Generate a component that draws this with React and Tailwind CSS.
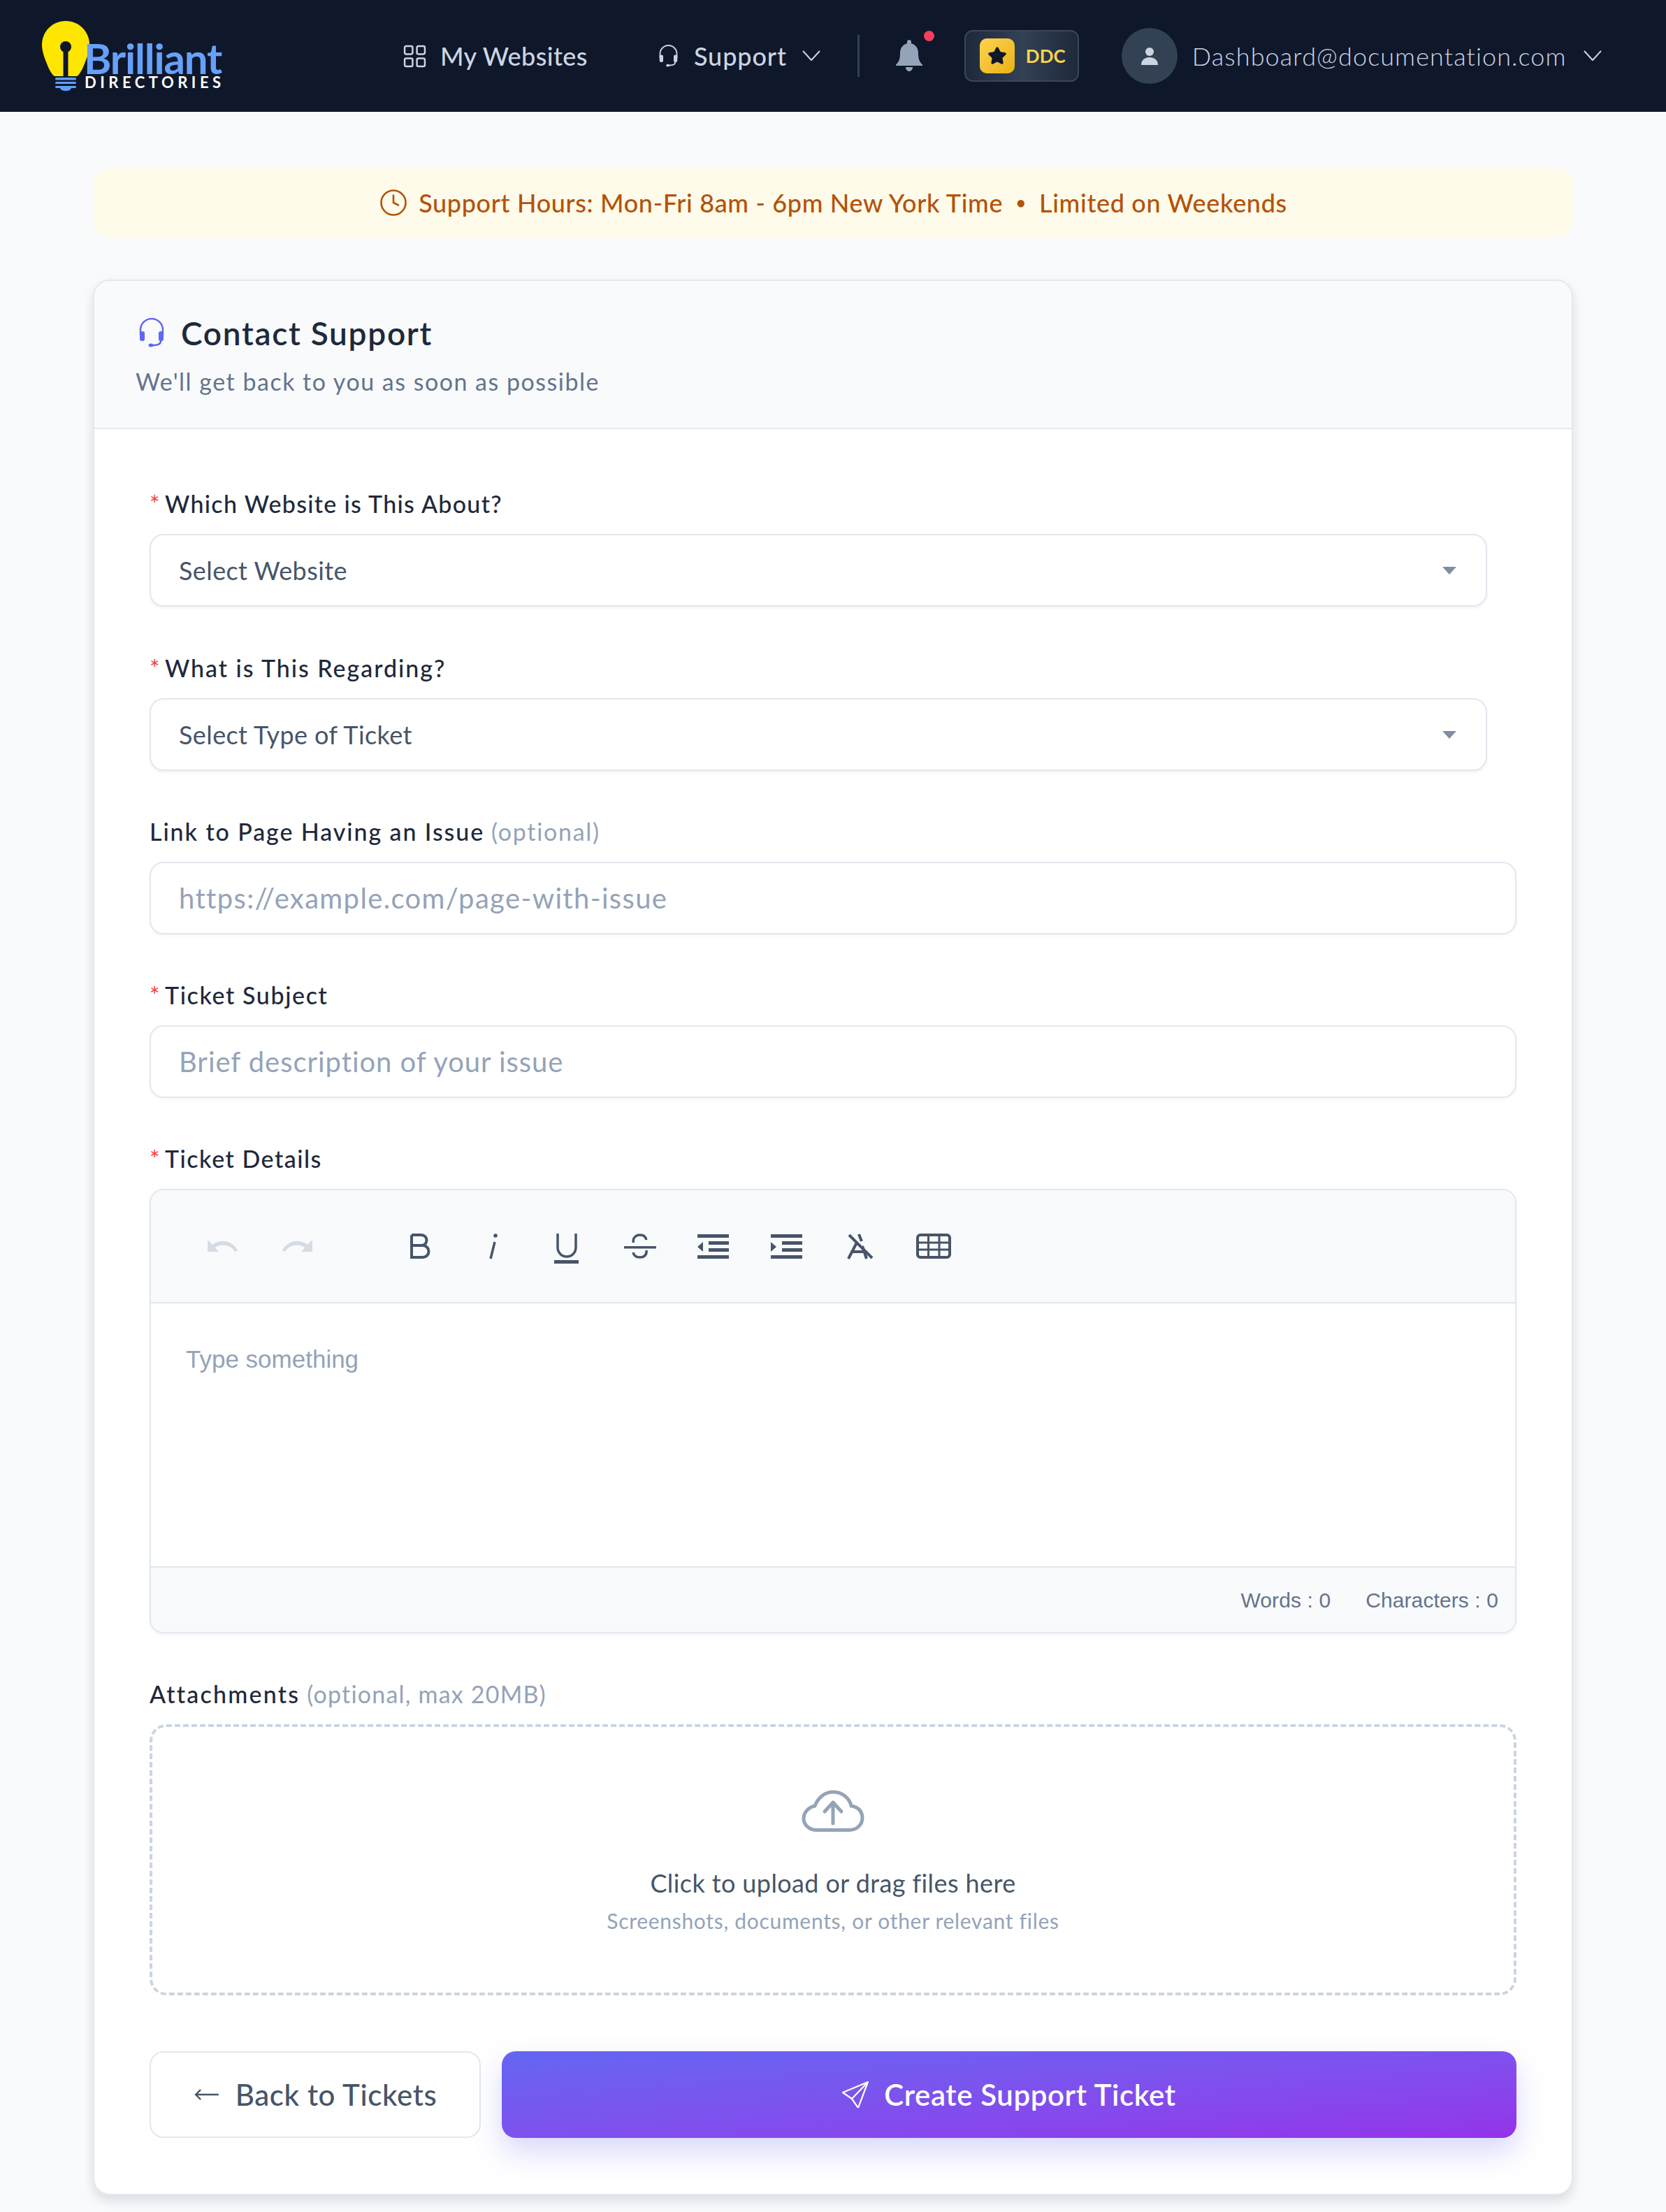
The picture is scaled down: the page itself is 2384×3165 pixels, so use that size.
import React from "react";
import { Clock, MoveLeft, Star } from "lucide-react";

const Headset = ({ className }) => (
  <svg viewBox="0 0 36 42" fill="none" stroke="currentColor" strokeWidth="2.500" strokeLinecap="round" className={className}>
    <path d="M2 24v-7a16 16 0 0 1 32 0v7" />
    <rect x="1" y="19" width="7" height="14" rx="3" fill="currentColor" stroke="none" />
    <rect x="28" y="19" width="7" height="14" rx="3" fill="currentColor" stroke="none" />
    <path d="M31 33c0 4-4 6-11 6" />
    <ellipse cx="17" cy="39" rx="3.500" ry="2.500" fill="currentColor" stroke="none" />
  </svg>
);

const Chevron = ({ className }) => (
  <svg viewBox="0 0 26 16" fill="none" stroke="currentColor" strokeWidth="2" strokeLinecap="round" strokeLinejoin="round" className={className}>
    <path d="M1.500 1.500 13 14 24.500 1.500" />
  </svg>
);

const GridIcon = ({ className }) => (
  <svg viewBox="0 0 32 32" fill="none" stroke="currentColor" strokeWidth="2.400" className={className}>
    <rect x="2" y="2" width="11" height="11" rx="2" />
    <rect x="19" y="2" width="11" height="11" rx="2" />
    <rect x="2" y="19" width="11" height="11" rx="2" />
    <rect x="19" y="19" width="11" height="11" rx="2" />
  </svg>
);

const BellIcon = ({ className }) => (
  <svg viewBox="0 0 40 46" fill="currentColor" className={className}>
    <path d="M20 0c1.700 0 3 1.300 3 3v2.200C30 7 33 12.500 33 19c0 9 2 13 6 16.500V37H1v-1.500C5 32 7 28 7 19 7 12.500 10 7 17 5.200V3c0-1.700 1.300-3 3-3z" />
    <path d="M15 39h10c0 3.500-2.200 6-5 6s-5-2.500-5-6z" />
  </svg>
);

const UserIcon = ({ className }) => (
  <svg viewBox="0 0 28 28" fill="currentColor" className={className}>
    <circle cx="14" cy="8" r="6" />
    <path d="M2 27c0-7 5-11 12-11s12 4 12 11z" />
  </svg>
);

const UndoIcon = ({ className }) => (
  <svg viewBox="0 0 48 20" fill="currentColor" className={className}>
    <path d="M1 0v18h17l-6-6c4-3 8-4 12-4 8 0 15 4 18 10l4-2C42 7 33 2 24 2c-6 0-11 2-16 5z" />
  </svg>
);

// toolbar icons share a 48 box, drawn 36px tall
const ToolIcon = ({ w = 48, children }) => (
  <svg viewBox={`0 0 ${w} 48`} width={w} height="48" fill="none" stroke="#475569" className="overflow-visible">
    {children}
  </svg>
);

const BoldIcon = () => (
  <ToolIcon>
    <path strokeWidth="4" d="M13 8v32h16a8.500 8.500 0 0 0 0-17H13m0 0h14a7.500 7.500 0 0 0 0-15H13" />
  </ToolIcon>
);

const ItalicIcon = () => (
  <ToolIcon>
    <path strokeWidth="3.500" d="M27 18l-6 24" />
    <circle cx="28" cy="9" r="2.800" fill="#475569" stroke="none" />
  </ToolIcon>
);

const UnderlineIcon = () => (
  <ToolIcon>
    <path strokeWidth="3.500" d="M12 6v20a13 13 0 0 0 26 0V6" />
    <rect x="7" y="44" width="35" height="5" fill="#475569" stroke="none" />
  </ToolIcon>
);

const StrikeIcon = () => (
  <ToolIcon>
    <rect x="2" y="24" width="46" height="3.500" fill="#475569" stroke="none" />
    <path strokeWidth="3.500" d="M15.500 19C14 12 19 8 25 8c5 0 8 3 9 7" />
    <path strokeWidth="3.500" d="M15 33c1 5 5 7 10 7 6 0 10-4 9-10" />
  </ToolIcon>
);

const IndentIcon = ({ out }) => (
  <ToolIcon>
    <rect x="2" y="7" width="45" height="5" fill="#475569" stroke="none" />
    <rect x="18" y="17" width="29" height="5" fill="#475569" stroke="none" />
    <rect x="18" y="27" width="29" height="5" fill="#475569" stroke="none" />
    <rect x="2" y="37" width="45" height="5" fill="#475569" stroke="none" />
    <path d={out ? "M10 18v14l-8-7z" : "M2 18v14l8-7z"} fill="#475569" stroke="none" />
  </ToolIcon>
);

const ClearIcon = () => (
  <ToolIcon>
    <path strokeWidth="4" d="M8 42l12-23M23 7l4 10M28 24l6 18M9 8l33 33M13 32h16" />
  </ToolIcon>
);

const TableIcon = () => (
  <ToolIcon w={50}>
    <rect x="2" y="8" width="46" height="32" rx="4" strokeWidth="4" />
    <path strokeWidth="3" d="M2 19h46M2 29h46M17.500 8v32M33 8v32" />
  </ToolIcon>
);

const CloudIcon = ({ className }) => (
  <svg viewBox="0 0 90 60" fill="none" stroke="currentColor" strokeWidth="5" strokeLinecap="round" strokeLinejoin="round" className={className}>
    <path d="M22 57.500h46c11 0 19-7.500 19-17.500 0-10-7-16-16-17C69 12 58 3 45 3 34 3 24 10 19 23 10 25 3 32 3 41c0 9 8 16.500 19 16.500z" />
    <path d="M45 48V18M33 31l12-13 12 13" />
  </svg>
);

const PlaneIcon = ({ className }) => (
  <svg viewBox="0 0 38 38" fill="none" stroke="currentColor" strokeWidth="2.200" strokeLinejoin="round" className={className}>
    <path d="M37 1 1 16l13 9 9 13z" />
    <path d="M37 1 14 25" />
  </svg>
);

const Logo = () => (
  <div className="relative w-[258px] h-[100px]">
    <svg viewBox="0 0 68 100" className="absolute left-0 top-0 w-[68px] h-[100px]">
      <path d="M34 0C15 0 0 15 0 34c0 10 4 20 9 32 4 9 8 13 9 13h32c1 0 5-4 9-13 5-12 9-22 9-32C68 15 53 0 34 0z" fill="#ffe600" />
      <circle cx="34" cy="37" r="8" fill="#0f172a" />
      <rect x="30.500" y="40" width="7" height="39" fill="#0f172a" />
      <rect x="19" y="81" width="30" height="3.500" rx="1.500" fill="#60a0fa" />
      <rect x="19" y="87" width="30" height="3" rx="1.500" fill="#60a0fa" />
      <rect x="19" y="93" width="30" height="3" rx="1.500" fill="#60a0fa" />
      <path d="M26 96h16c-1 3-4 4-8 4s-7-1-8-4z" fill="#60a0fa" />
    </svg>
    <div className="absolute left-[60px] top-[28px] font-[Lato,sans-serif] font-bold text-[60px] leading-[50px] text-[#66a1f9] tracking-[-1.200px]">
      Brilliant
    </div>
    <div className="absolute left-[61px] top-[78px] font-[Lato,sans-serif] font-bold text-[22px] leading-[20px] text-white tracking-[5.500px]">
      DIRECTORIES
    </div>
  </div>
);

const Header = () => (
  <header className="h-[160px] bg-[#0f172a] flex items-center pl-[60px] text-[#cbd5e1]">
    <Logo />
    <div className="flex items-center ml-[259px]">
      <GridIcon className="w-[33px] h-[33px]" />
      <span className="ml-[20px] w-[211px] text-[36px] font-medium tracking-[0.4px]">My Websites</span>
    </div>
    <div className="flex items-center ml-[102px]">
      <Headset className="w-[27px] h-[32px]" />
      <span className="ml-[23px] text-[36px] font-medium tracking-[0.9px]">Support</span>
      <Chevron className="ml-[22px] w-[26px] h-[16px]" />
    </div>
    <div className="w-[3px] h-[60px] bg-[#334155] ml-[53px]" />
    <div className="relative ml-[51px] text-[#94a3b8]">
      <BellIcon className="w-[40px] h-[46px]" />
      <span className="absolute -top-[13px] -right-[16px] w-[15px] h-[15px] rounded-full bg-[#f43f5e]" />
    </div>
    <div className="ml-[59px] w-[164px] h-[74px] rounded-[12px] border-2 border-[#3c4656] bg-linear-to-r from-[#1e293b] via-[#334155] to-[#1e293b] flex items-center pl-[20px]">
      <div className="w-[50px] h-[50px] rounded-[10px] bg-linear-to-br from-[#fcd34d] to-[#eab308] flex items-center justify-center">
        <Star className="w-[28px] h-[28px] fill-[#0f172a] text-[#0f172a]" />
      </div>
      <span className="ml-[16px] text-[#fcd34d] text-[26px] font-bold">DDC</span>
    </div>
    <div className="ml-[61px] w-[80px] h-[80px] rounded-full bg-[#334155] flex items-center justify-center text-[#cbd5e1]">
      <UserIcon className="w-[28px] h-[28px]" />
    </div>
    <span className="ml-[21px] text-[36px] font-light tracking-[1.100px]">Dashboard@documentation.com</span>
    <Chevron className="ml-[24px] w-[26px] h-[16px]" />
  </header>
);

const Label = ({ required, hint, track, hintTrack, children }) => (
  <div className="h-[48px] mb-[20px] flex items-center text-[34px] font-medium text-[#1e293b]">
    {required && <span className="text-[#ef4444] text-[34px] w-[22px] font-normal">*</span>}
    <span className={track}>{children}</span>
    {hint && <span className={`ml-[10px] font-normal text-[#94a3b8] ${hintTrack}`}>{hint}</span>}
  </div>
);

const SelectBox = ({ children }) => (
  <div className="w-[1914px] h-[104px] rounded-[20px] border-2 border-[#e2e8f0] bg-white shadow-[0_2px_4px_rgba(15,23,42,0.06)] flex items-center justify-between pl-[40px] pr-[42px] text-[36px] text-[#475569] tracking-[0.4px]">
    {children}
    <span className="w-0 h-0 border-x-[10px] border-x-transparent border-t-[11px] border-t-[#7f8ea3]" />
  </div>
);

const TextBox = ({ placeholder, className }) => (
  <input
    placeholder={placeholder}
    className={`block w-full h-[104px] rounded-[20px] border-2 border-[#e2e8f0] bg-white shadow-[0_2px_4px_rgba(15,23,42,0.04)] px-[40px] text-[40px] placeholder:text-[#94a3b8] outline-none ${className}`}
  />
);

const Toolbar = () => (
  <div className="h-[162px] shrink-0 bg-[#f8fafc] border-b-2 border-[#e2e8f0] flex items-center pl-[79px]">
    <div className="w-12 flex justify-center"><UndoIcon className="w-[46px] h-[19px] text-[#d5dbe3]" /></div>
    <div className="w-12 ml-[58px] flex justify-center"><UndoIcon className="w-[46px] h-[19px] text-[#d5dbe3] -scale-x-100" /></div>
    <div className="ml-[127px] flex items-center gap-[57px]">
      <BoldIcon />
      <ItalicIcon />
      <UnderlineIcon />
      <StrikeIcon />
      <IndentIcon out />
      <IndentIcon />
      <ClearIcon />
      <TableIcon />
    </div>
  </div>
);

export default function App() {
  return (
    <div className="min-h-[3165px] bg-[#f8fafc] font-[Lato,sans-serif]">
      <Header />
      <main className="mx-[133px] pt-[80px]">
        <div className="h-[100px] rounded-[24px] bg-[#fffbeb] flex items-center justify-center text-[36px] font-medium text-[#b45309] tracking-[0.65px]">
          <Clock className="w-[42px] h-[42px] mr-[15px]" strokeWidth={1.5} />
          <span>Support Hours: Mon-Fri 8am - 6pm New York Time</span>
          <span className="mx-[18px] text-[26px]">•</span>
          <span>Limited on Weekends</span>
        </div>

        <section className="mt-[60px] rounded-[24px] border-2 border-[#e2e8f0] bg-white shadow-[0_8px_16px_rgba(15,23,42,0.12)] overflow-hidden">
          <div className="h-[212px] bg-[#f8fafc] border-b-2 border-[#e2e8f0] pl-[59px] pt-[42px]">
            <div className="flex items-center h-[64px]">
              <Headset className="w-[36px] h-[42px] ml-[5px] text-[#6366f1]" />
              <h1 className="ml-[24px] text-[46px] font-semibold text-[#1e293b] tracking-[1.700px]">Contact Support</h1>
            </div>
            <p className="mt-[12px] text-[34px] text-[#64748b] tracking-[1.500px]">We'll get back to you as soon as possible</p>
          </div>

          <div className="px-[79px] pt-[82px] pb-[80px]">
            <Label required track="tracking-[1.300px]">Which Website is This About?</Label>
            <SelectBox>Select Website</SelectBox>

            <div className="mt-[63px]">
              <Label required track="tracking-[1.950px]">What is This Regarding?</Label>
              <SelectBox>Select Type of Ticket</SelectBox>
            </div>

            <div className="mt-[62px]">
              <Label hint="(optional)" track="tracking-[1.900px]" hintTrack="tracking-[1.700px]">Link to Page Having an Issue</Label>
              <TextBox placeholder="https://example.com/page-with-issue" className="tracking-[1.350px]" />
            </div>

            <div className="mt-[62px]">
              <Label required track="tracking-[1.600px]">Ticket Subject</Label>
              <TextBox placeholder="Brief description of your issue" className="tracking-[0.950px]" />
            </div>

            <div className="mt-[62px]">
              <Label required track="tracking-[1.500px]">Ticket Details</Label>
              <div className="h-[636px] rounded-[20px] border-2 border-[#e2e8f0] shadow-[0_2px_4px_rgba(15,23,42,0.06)] overflow-hidden flex flex-col">
                <Toolbar />
                <div className="flex-1 px-[50px] pt-[54px] font-['Liberation_Sans',sans-serif] text-[35px] text-[#94a3b8]">
                  Type something
                </div>
                <div className="h-[94px] shrink-0 bg-[#f8fafc] border-t-2 border-[#e2e8f0] flex items-center justify-end gap-[50px] pr-[24px] font-['Liberation_Sans',sans-serif] text-[30px] tracking-[0.1px] text-[#64748b]">
                  <span>Words : 0</span>
                  <span>Characters : 0</span>
                </div>
              </div>
            </div>

            <div className="mt-[62px]">
              <Label hint="(optional, max 20MB)" track="tracking-[2.200px]" hintTrack="tracking-[1.200px]">Attachments</Label>
              <div className="h-[388px] rounded-[24px] border-4 border-dashed border-[#cbd5e1] flex flex-col items-center pt-[90px]">
                <CloudIcon className="w-[90px] h-[60px] text-[#94a3b8]" />
                <p className="mt-[46px] text-[36px] text-[#475569] tracking-[0.4px]">Click to upload or drag files here</p>
                <p className="mt-[5px] text-[30px] text-[#94a3b8] tracking-[0.7px]">Screenshots, documents, or other relevant files</p>
              </div>
            </div>

            <div className="mt-[80px] flex gap-[30px]">
              <button className="w-[474px] h-[124px] rounded-[20px] border-2 border-[#e2e8f0] bg-white flex items-center justify-center text-[42px] font-medium text-[#475569] tracking-[0.6px]">
                <MoveLeft className="w-[38px] h-[38px] mr-[22px]" strokeWidth={1.5} />
                Back to Tickets
              </button>
              <button className="flex-1 h-[124px] rounded-[20px] bg-linear-to-br from-[#6366f1] to-[#9333ea] shadow-[0_20px_40px_rgba(99,102,241,0.25)] flex items-center justify-center text-[42px] font-semibold text-white tracking-[0.6px]">
                <PlaneIcon className="w-[38px] h-[38px] mr-[22px]" />
                Create Support Ticket
              </button>
            </div>
          </div>
        </section>
      </main>
    </div>
  );
}
